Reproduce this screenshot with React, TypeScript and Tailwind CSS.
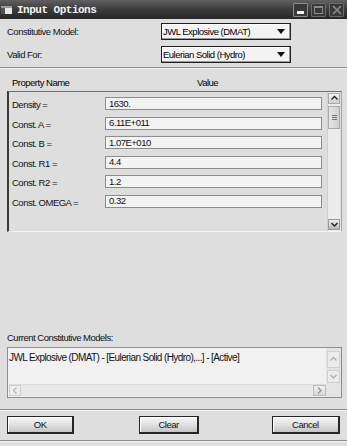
import React from "react";

const Chevron = ({ dir, color = "#222" }: { dir: "up" | "down" | "left" | "right"; color?: string }) => {
  const paths: Record<string, string> = {
    up: "M1.5 5.5 L4.5 2.5 L7.5 5.5",
    down: "M1.5 3 L4.5 6 L7.5 3",
    left: "M5.5 1.5 L2.5 4.5 L5.5 7.5",
    right: "M3 1.5 L6 4.5 L3 7.5",
  };
  return (
    <svg width="9" height="9" viewBox="0 0 9 9">
      <path d={paths[dir]} fill="none" stroke={color} strokeWidth="1.4" />
    </svg>
  );
};

const Dropdown = ({ text }: { text: string }) => (
  <div className="w-[130px] h-[17px] border border-[#1e1e1e] bg-[#f3f3f3] shadow-[inset_-1px_-1px_0_#9a9a9a,inset_1px_1px_0_#ffffff] flex items-center pl-[1px] pr-[5px]">
    <span className="flex-1 text-black">{text}</span>
    <svg width="8" height="6" viewBox="0 0 8 6">
      <path d="M0 0 H8 L4 5 Z" fill="#111" />
    </svg>
  </div>
);

const rows: [string, string][] = [
  ["Density =", "1630."],
  ["Const. A =", "6.11E+011"],
  ["Const. B =", "1.07E+010"],
  ["Const. R1 =", "4.4"],
  ["Const. R2 =", "1.2"],
  ["Const. OMEGA =", "0.32"],
];

const Separator = () => (
  <div className="flex flex-col">
    <div className="h-px bg-[#8a8a8a]" />
    <div className="h-px bg-[#f6f6f6]" />
  </div>
);

const Btn = ({ label, w, className = "" }: { label: string; w: string; className?: string }) => (
  <div
    className={`${w} ${className} h-[18px] border border-[#262626] border-b-2 border-r-2 bg-gradient-to-b from-[#f6f6f6] via-[#e2e2e2] to-[#c4c4c4] shadow-[inset_1px_1px_0_#ffffff] flex items-center justify-center text-[#111]`}
  >
    {label}
  </div>
);

export default function App() {
  return (
    <div className="w-[347px] h-[446px] bg-[#dedede] flex flex-col overflow-hidden font-['Liberation_Sans',Arial,sans-serif] text-[9.5px] leading-[10px] tracking-[-0.5px] text-[#111]">
      {/* Title bar */}
      <div className="h-[19px] bg-gradient-to-b from-[#606060] via-[#3c3c3c] to-[#262626] flex items-center relative">
        <div className="ml-[1px] w-[11px] h-[8px] bg-[#e8e8e8] border-t-2 border-[#9a9a9a] flex">
          <div className="w-[4px] h-full bg-[#555]" />
        </div>
        <span className="ml-[5px] font-['Liberation_Mono',monospace] font-bold text-[11px] tracking-[-0.5px] text-[#f2f2f2] leading-[12px]">
          Input Options
        </span>
        <div className="ml-auto mr-[3px] flex gap-[3px] mt-[1px]">
          <div className="w-[15px] h-[14px] border border-[#8a8a8a] bg-[#3a3a3a] rounded-[1px] flex items-end justify-start pl-[3px] pb-[2px]">
            <div className="w-[7px] h-[3px] bg-[#f4f4f4]" />
          </div>
          <div className="w-[15px] h-[14px] border border-[#6a6a6a] bg-[#3a3a3a] rounded-[1px] flex items-center justify-center">
            <div className="w-[9px] h-[8px] border border-[#8a8a8a] border-t-2" />
          </div>
          <div className="w-[15px] h-[14px] border border-[#6a6a6a] bg-[#3a3a3a] rounded-[1px] flex items-center justify-center">
            <svg width="10" height="10" viewBox="0 0 10 10">
              <path d="M1 1 L9 9 M9 1 L1 9" stroke="#8c8c8c" strokeWidth="1.6" />
            </svg>
          </div>
        </div>
      </div>

      {/* Top selectors */}
      <div className="flex flex-col px-[7px]">
        <div className="mt-[4px] h-[17px] flex items-center">
          <span className="w-[154px]">Constitutive Model:</span>
          <Dropdown text="JWL Explosive (DMAT)" />
        </div>
        <div className="mt-[6px] h-[17px] flex items-center">
          <span className="w-[154px]">Valid For:</span>
          <Dropdown text="Eulerian Solid (Hydro)" />
        </div>
      </div>

      <div className="mt-[4px]">
        <Separator />
      </div>

      {/* Header */}
      <div className="h-[22px] flex items-center pl-[12px] pt-[6px]">
        <span className="w-[185px] text-black">Property Name</span>
        <span className="text-black">Value</span>
      </div>

      {/* Property table */}
      <div className="mx-[7px] w-[335px] h-[141px] border-t border-t-[#707070] border-l-2 border-l-[#3a3a3a] border-r border-r-[#a8a8a8] border-b border-b-[#f4f4f4] flex">
        <div className="flex-1 flex flex-col pt-[5px] pl-[3px]">
          {rows.map(([name, value]) => (
            <div key={name} className="h-[19.6px] flex items-start">
              <span className="w-[93px] pt-[3px]">{name}</span>
              <div className="w-[217px] h-[13px] border border-[#8c8c8c] bg-[#f3f3f3] flex items-center pl-[3px] text-[#111]">
                {value}
              </div>
            </div>
          ))}
        </div>
        <div className="w-[13px] mr-[1px] flex flex-col bg-[#ececec] border-l border-[#d0d0d0]">
          <div className="h-[11px] mt-[1px] bg-gradient-to-b from-[#f4f4f4] to-[#cfcfcf] border border-[#aaa] flex items-center justify-center">
            <Chevron dir="up" />
          </div>
          <div className="h-[23px] mt-[2px] bg-gradient-to-r from-[#e6e6e6] to-[#cfcfcf] border border-[#aaa] flex flex-col items-center justify-center gap-[1px]">
            <div className="w-[5px] h-px bg-[#777]" />
            <div className="w-[5px] h-px bg-[#777]" />
            <div className="w-[5px] h-px bg-[#777]" />
          </div>
          <div className="flex-1" />
          <div className="h-[11px] mb-[1px] bg-gradient-to-b from-[#f0f0f0] to-[#b8b8b8] border border-[#999] flex items-center justify-center">
            <Chevron dir="down" />
          </div>
        </div>
      </div>

      {/* Current models */}
      <div className="mt-[101px] px-[7px]">Current Constitutive Models:</div>
      <div className="mt-[4px] mx-[7px] w-[335px] h-[51px] border border-[#8e8e8e] bg-[#f1f1f1] flex">
        <div className="flex-1 flex flex-col">
          <div className="flex-1 pl-[1px] pt-[4px] text-[10px] leading-[12px] tracking-[-0.6px] text-[#111]">
            JWL Explosive (DMAT) - [Eulerian Solid (Hydro),...] - [Active]
          </div>
          <div className="h-[12px] mb-[1px] ml-[1px] flex bg-[#e8e8e8] border-t border-[#dcdcdc]">
            <div className="w-[12px] h-full border border-[#cfcfcf] bg-[#eeeeee] flex items-center justify-center">
              <Chevron dir="left" color="#b8b8b8" />
            </div>
            <div className="flex-1" />
            <div className="w-[13px] h-full border border-[#bdbdbd] bg-gradient-to-b from-[#f0f0f0] to-[#d8d8d8] flex items-center justify-center">
              <Chevron dir="right" color="#9c9c9c" />
            </div>
          </div>
        </div>
        <div className="w-[15px] flex flex-col bg-[#e4e4e4] px-[1px] pt-[3px]">
          <div className="h-[17px] border border-[#d0d0d0] bg-[#ececec] flex items-center justify-center">
            <Chevron dir="up" color="#b0b0b0" />
          </div>
          <div className="h-[13px] mt-[2px] border border-[#d0d0d0] bg-[#ececec] flex items-center justify-center">
            <Chevron dir="down" color="#b0b0b0" />
          </div>
        </div>
      </div>

      <div className="mt-[11px]">
        <Separator />
      </div>

      {/* Buttons */}
      <div className="mt-[5px] flex px-[7px]">
        <Btn label="OK" w="w-[68px]" />
        <Btn label="Clear" w="w-[60px]" className="ml-[65px]" />
        <Btn label="Cancel" w="w-[69px]" className="ml-[73px]" />
      </div>

      <div className="mt-[6px]">
        <Separator />
      </div>
    </div>
  );
}
